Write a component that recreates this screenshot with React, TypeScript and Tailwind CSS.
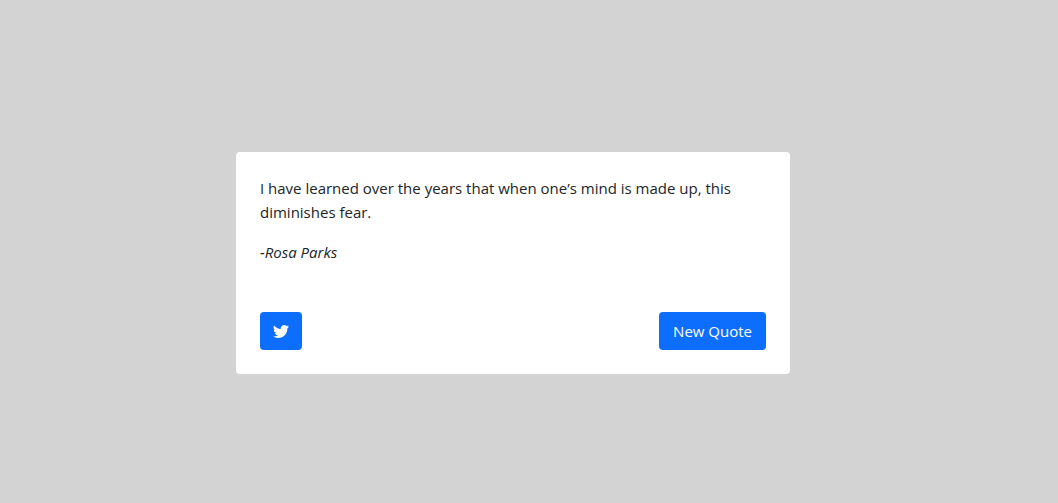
import { BsTwitter } from "react-icons/bs";

export default function App() {
  return (
    <main className="flex min-h-screen flex-col items-center justify-center bg-[#d3d3d3] pt-[23px] pr-8 font-['Open_Sans','Noto_Sans',sans-serif] text-[15px] leading-6 text-[#212529]">
      <section className="w-full max-w-[554px] rounded bg-white p-6">
        <p className="mb-4">
          I have learned over the years that when one’s mind is made up, this diminishes fear.
        </p>
        <p className="mb-12 italic">-Rosa Parks</p>
        <div className="flex items-center justify-between">
          <a
            href="#tweet"
            aria-label="Tweet this quote"
            className="flex h-[38px] items-center rounded bg-[#0d6efd] px-[13px] text-white"
          >
            <BsTwitter className="size-4" />
          </a>
          <button type="button" className="h-[38px] rounded bg-[#0d6efd] px-[14px] text-white">
            New Quote
          </button>
        </div>
      </section>
    </main>
  );
}
